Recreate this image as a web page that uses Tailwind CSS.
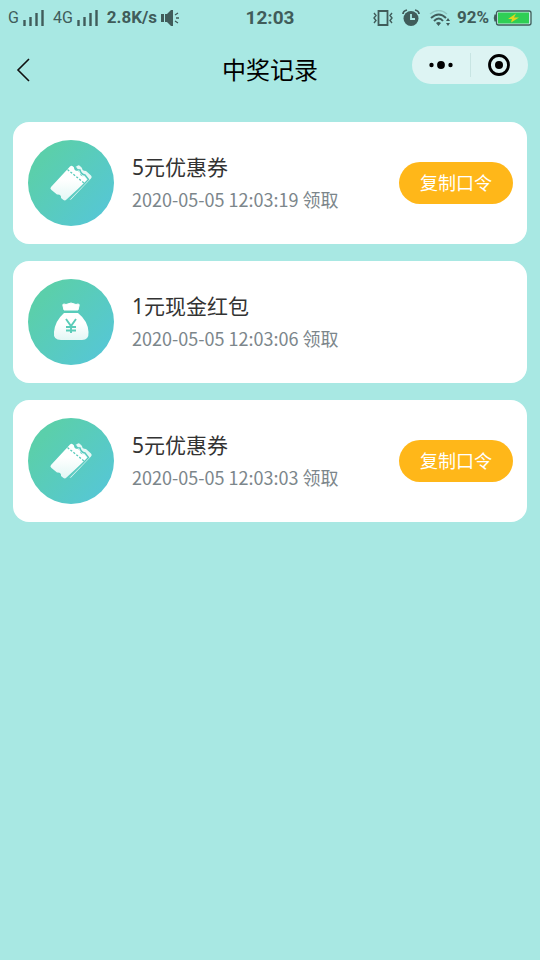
<!DOCTYPE html>
<html lang="zh-CN">
<head>
<meta charset="utf-8">
<meta name="viewport" content="width=device-width, initial-scale=1">
<title>中奖记录</title>
<script src="https://cdn.jsdelivr.net/npm/@tailwindcss/browser@4"></script>
</head>
<body class="min-h-screen bg-[#a8e8e3] font-['Noto_Sans','Noto_Sans_CJK_SC',sans-serif] text-[#333]">
<svg class="absolute size-0" aria-hidden="true">
  <defs>
    <linearGradient id="disc" x1="0.1" y1="0.15" x2="0.9" y2="0.85"><stop offset="0.1" stop-color="#5bcfab"/><stop offset="1" stop-color="#56c7d4"/></linearGradient>
    <linearGradient id="paper" x1="0" y1="0" x2="0" y2="1"><stop offset="0.4" stop-color="#fff"/><stop offset="1" stop-color="#e2f7f5"/></linearGradient>
    <symbol id="ticket" viewBox="0 0 86 86">
      <circle cx="43" cy="43" r="43" fill="url(#disc)"/>
      <path d="M47 27L50 25.500Q51 25 52 26L54 28Q54 31 58 31L63 35.500Q64.500 37 63 38.500L43 59.500L40 60L58 41Z" fill="#e6f8f5"/>
      <path d="M23 47L42 26.500Q43.500 25 45 26.500L46 27.500Q46 31 50 31L52 33Q52 36.500 56 36.500L58 38.500Q59.500 40 58 41.500L38.500 59.500Q37 61 35.500 60L33 58Q33.500 54 29 54.500L23.500 50Q21.500 48.500 23 47Z" fill="url(#paper)"/>
      <path d="M47.500 26.500Q48 30 52 30Q53 34.500 57 35L60.500 39.500L40 60.500" fill="none" stroke="#58cabf" stroke-width="1.400"/>
      <path d="M39.500 29.500L56 43" fill="none" stroke="#59cbbb" stroke-width="1.300" stroke-dasharray="2.200 1.600"/>
    </symbol>
    <symbol id="bag" viewBox="0 0 86 86">
      <circle cx="43" cy="43" r="43" fill="url(#disc)"/>
      <path d="M35 27Q34 24 38 25.500L43 24L48 25.500Q52 24 51 27L50 31H36Z" fill="#fff" stroke="#fff" stroke-linejoin="round"/>
      <path d="M36 34H50Q60 42 60.500 53Q61 61 54 61H33Q25 61 26 53Q27 42 36 34Z" fill="url(#paper)"/>
      <path d="M38 40L43 47L48 40M43 47V54M38 48H48M38 51.500H48" fill="none" stroke="#5accb8" stroke-width="1.900"/>
    </symbol>
    <symbol id="bars" viewBox="0 0 22 16">
      <path d="M1.500 10V16M7.500 7V16M13.500 3V16M19.500 0V16" stroke="#405c5a" stroke-width="2.400"/>
    </symbol>
  </defs>
</svg>

<header>
  <div class="flex h-9 items-center justify-between px-2 font-[Roboto,sans-serif] text-[#405c5a]">
    <div class="flex flex-1 items-center">
      <span class="text-base">G</span>
      <svg class="ml-1 h-4 w-[22px]"><use href="#bars"/></svg>
      <span class="ml-2 text-base">4G</span>
      <svg class="ml-1 h-4 w-[22px]"><use href="#bars"/></svg>
      <span class="ml-2 text-[17px] font-bold">2.8K/s</span>
      <svg class="ml-1 h-4 w-5" viewBox="0 0 20 16" fill="#405c5a"><path d="M0 4H3V12H0ZM4 4H6L10 0H12V16H10L6 12H4Z"/><path d="M14 5L17 3M15 8H18M14 11L17 13" stroke="#405c5a" stroke-width="1.300"/></svg>
    </div>
    <time class="text-[19px] font-bold">12:03</time>
    <div class="flex flex-1 items-center justify-end">
      <svg class="h-4 w-5" viewBox="0 0 20 16" fill="none" stroke="#405c5a"><path d="M5.500 1H14.500V15H5.500Z" stroke-width="1.800"/><path d="M1 3L3 5.500L1 8L3 10.500L1 13M19 3L17 5.500L19 8L17 10.500L19 13" stroke-width="1.400"/></svg>
      <svg class="ml-2 h-[18px] w-5" viewBox="0 0 20 18"><circle cx="10" cy="9.500" r="7.500" fill="#405c5a"/><path d="M2 5Q2 2 6 1M18 5Q18 2 14 1" fill="none" stroke="#405c5a" stroke-width="1.800"/><path d="M10 5V10H14" fill="none" stroke="#a8e8e3" stroke-width="1.800"/></svg>
      <svg class="mr-[6px] ml-2 h-4 w-[22px]" viewBox="0 0 22 16" fill="none" stroke="#405c5a"><path d="M1 4Q10 -3 18 4" stroke="#8fc6c1" stroke-width="1.400"/><path d="M2 8Q10 1 17 8M5 11Q10 6 14 11" stroke-width="2"/><path d="M7 13Q9.500 11 12 13L9.500 16ZM17 11L19 8L21 11ZM17 13H21L19 16Z" fill="#405c5a" stroke="none"/></svg>
      <span class="text-[17px] font-bold">92%</span>
      <svg class="ml-1 h-4 w-[39px]" viewBox="0 0 39 16"><path d="M3 4.500H1.500Q0 8 1.500 11.500H3Z" fill="#405c5a"/><rect x="3.500" y="1" width="34.500" height="14" rx="2" fill="#c6eee8" stroke="#405c5a" stroke-width="1.300"/><rect x="5" y="2.500" width="31" height="11" fill="#2fce55"/><path d="M23 3.500L15 9H19L18 12.500L26 7.500H21Z" fill="#e3d41e"/></svg>
    </div>
  </div>
  <div class="grid h-[68px] grid-cols-[1fr_auto_1fr] items-center px-3">
    <button type="button" aria-label="返回" class="ml-1 justify-self-start"><svg class="h-6 w-4" viewBox="0 0 16 24" fill="none" stroke="#111" stroke-width="1.600"><path d="M13 1L2 12L13 23"/></svg></button>
    <h1 class="text-2xl text-black">中奖记录</h1>
    <div class="mb-[10px] flex h-[38px] w-[116px] items-center justify-self-end rounded-full bg-[#ddf4f3]">
      <button type="button" aria-label="更多" class="flex flex-1 justify-center"><svg class="h-2 w-6" viewBox="0 0 24 8"><circle cx="2.500" cy="4" r="2.200"/><circle cx="12" cy="4" r="3.900"/><circle cx="21.500" cy="4" r="2.200"/></svg></button>
      <span class="h-6 w-px bg-[#c8e5e3]"></span>
      <button type="button" aria-label="关闭" class="flex flex-1 justify-center"><svg class="size-[22px]" viewBox="0 0 22 22"><circle cx="11" cy="11" r="9.500" fill="none" stroke="#000" stroke-width="2.800"/><circle cx="11" cy="11" r="4"/></svg></button>
    </div>
  </div>
</header>

<main class="px-[13px] pt-[18px]">
  <ul class="flex flex-col gap-[17px]">
    <li class="flex items-center rounded-2xl bg-white py-[18px] pr-[14px] pl-[15px]">
      <svg class="size-[86px] shrink-0" aria-hidden="true"><use href="#ticket"/></svg>
      <div class="ml-[18px] flex-1">
        <h2 class="text-[21px] leading-8">5元优惠券</h2>
        <p class="font-['Noto_Sans_CJK_SC',sans-serif] text-lg leading-8 text-[#7c868b]">2020-05-05 12:03:19 领取</p>
      </div>
      <button type="button" class="h-[42px] rounded-full bg-[#ffb719] px-[21px] text-lg text-white">复制口令</button>
    </li>
    <li class="flex items-center rounded-2xl bg-white py-[18px] pr-[14px] pl-[15px]">
      <svg class="size-[86px] shrink-0" aria-hidden="true"><use href="#bag"/></svg>
      <div class="ml-[18px] flex-1">
        <h2 class="text-[21px] leading-8">1元现金红包</h2>
        <p class="font-['Noto_Sans_CJK_SC',sans-serif] text-lg leading-8 text-[#7c868b]">2020-05-05 12:03:06 领取</p>
      </div>
    </li>
    <li class="flex items-center rounded-2xl bg-white py-[18px] pr-[14px] pl-[15px]">
      <svg class="size-[86px] shrink-0" aria-hidden="true"><use href="#ticket"/></svg>
      <div class="ml-[18px] flex-1">
        <h2 class="text-[21px] leading-8">5元优惠券</h2>
        <p class="font-['Noto_Sans_CJK_SC',sans-serif] text-lg leading-8 text-[#7c868b]">2020-05-05 12:03:03 领取</p>
      </div>
      <button type="button" class="h-[42px] rounded-full bg-[#ffb719] px-[21px] text-lg text-white">复制口令</button>
    </li>
  </ul>
</main>
</body>
</html>
